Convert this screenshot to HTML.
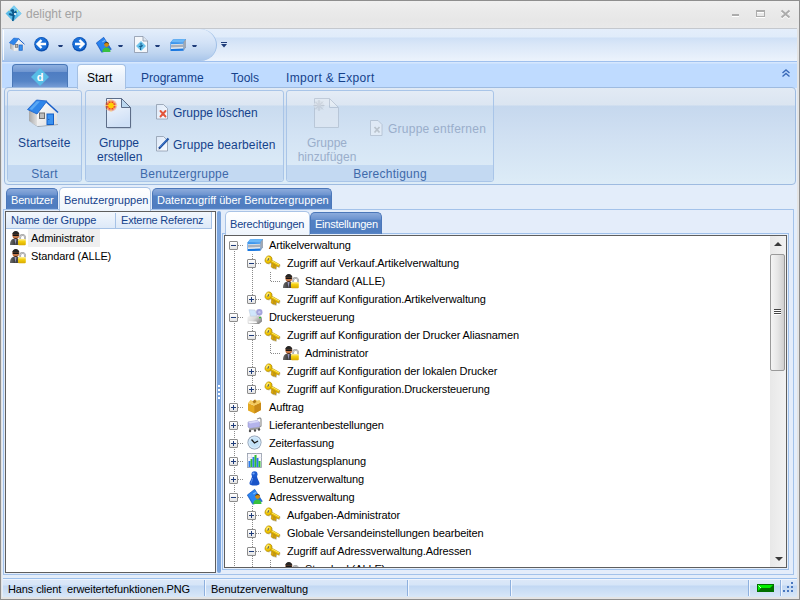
<!DOCTYPE html>
<html><head><meta charset="utf-8">
<style>
*{box-sizing:border-box;margin:0;padding:0}
html,body{width:800px;height:600px;overflow:hidden;background:#dfe9f5;font-family:"Liberation Sans",sans-serif;font-size:11px;color:#000}
.a{position:absolute}
svg{position:absolute;overflow:visible}
#frame{left:0;top:0;width:800px;height:600px;background:#e4e4e4;border:1px solid #8e8e8e}
#title{left:1px;top:1px;width:798px;height:27px;background:linear-gradient(#f0f0f0,#eaeaea 40%,#e7e7e7 70%,#e9e9e9)}
.tt{font-size:12px;color:#a3a3a3;white-space:nowrap}
#qat{left:2px;top:28px;width:795px;height:33px;background:linear-gradient(#e4eefb,#e0ecfa 8px,#cfe0f6 9px,#dae7f8 50%,#ecf3fc);border-top:1px solid #c4c8ce}
#qatl{left:2px;top:29px;width:215px;height:32px;border-radius:0 17px 17px 0/0 16px 16px 0;background:linear-gradient(#e4eefb,#d4e3f7 40%,#bfd5f0 75%,#a8c5ea);border-right:1px solid #9fbfe6}
#tabs{left:2px;top:61px;width:795px;height:27px;background:linear-gradient(#d6e7fd,#d6e7fd 1px,#bfdbff 2px);border-top:1px solid #9fc0ee}
.rt{position:absolute;font-size:12px;color:#15428b;white-space:nowrap;top:71px}
#appb{left:12px;top:64px;width:56px;height:24px;border:1px solid #4a78b8;border-bottom:none;border-radius:4px 4px 0 0;background:linear-gradient(#8eb0e0,#6f96d0 30%,#4e7dc2 32%,#5584c6 70%,#7aa0d8)}
#tstart{left:77px;top:64px;width:49px;height:25px;border:1px solid #a4c0e4;border-bottom:none;border-radius:4px 4px 0 0;background:linear-gradient(#fbfdff,#e9f1fb 50%,#dfe9f6)}
#rib{left:4px;top:87px;width:792px;height:98px;border:1px solid #9ebbe0;border-radius:4px;background:linear-gradient(#e2eaf4,#dbe5f1 17px,#c6d8ee 18px,#d0e0f2 50%,#ddecf7)}
.grp{position:absolute;border:1px solid #a9c5e8;border-radius:3px;background:linear-gradient(#e4ecf6,#dce6f2 14px,#c9dbef 15px,#d3e3f4 50%,#deedf8)}
.gl{position:absolute;left:0;bottom:0;width:100%;height:16px;background:#c3d9f2;text-align:center;font-size:12px;color:#3e6aaa;line-height:18px;border-radius:0 0 3px 3px;letter-spacing:0.25px}
.bt{position:absolute;font-size:12px;color:#15428b;white-space:nowrap;text-align:center;line-height:14px}
.dis{color:#9aaecb}
.dt{position:absolute;height:22px;border-radius:5px 5px 0 0;background:linear-gradient(#8cabdc,#6c93cf 30%,#5481c3 34%,#4f7dc0 90%,#5a86c6);color:#fff;font-size:11px;line-height:21px;white-space:nowrap;padding-left:4px;border:1px solid #4b77b9;border-bottom:none}
.dta{background:linear-gradient(#ffffff,#eef4fc);color:#15428b;border-color:#a9c3e6}
#tree{left:0;top:0;width:800px;height:600px;clip-path:inset(236px 30px 33px 225px)}
.tr{position:absolute;font-size:11px;white-space:nowrap;line-height:18px;height:18px;letter-spacing:-0.12px}
.ex{position:absolute;width:9px;height:9px;border:1px solid #8c8c8c;border-radius:1px;background:linear-gradient(#fff,#e4e4e4)}
.ex:before{content:"";position:absolute;left:1px;top:3px;width:5px;height:1px;background:#1f3c7a}
.ex.p:after{content:"";position:absolute;left:3px;top:1px;width:1px;height:5px;background:#1f3c7a}
.vd{position:absolute;width:1px;background-image:linear-gradient(#8a8a8a 50%,transparent 50%);background-size:1px 2px}
.hd{position:absolute;height:1px;background-image:linear-gradient(90deg,#8a8a8a 50%,transparent 50%);background-size:2px 1px}

</style></head><body>

<svg width="0" height="0" style="position:absolute"><defs><linearGradient id="ub" x1="0" x2="1"><stop offset="0" stop-color="#6a6a6a"/><stop offset="0.5" stop-color="#3c3c3c"/><stop offset="1" stop-color="#5a5a5a"/></linearGradient><linearGradient id="ul" x1="0" x2="0" y1="0" y2="1"><stop offset="0" stop-color="#fff0a0"/><stop offset="0.4" stop-color="#f4d010"/><stop offset="1" stop-color="#d8a800"/></linearGradient></defs></svg>
<div class="a" id="frame"></div>
<div class="a" id="title"></div>
<svg style="left:5px;top:5px" width="17" height="17" viewBox="0 0 17 17"><path d="M9 0.5 L16.5 8.5 L8 16.5 L0.5 8.5Z" fill="#5bbce8"/><path d="M9 0.5 L16.5 8.5 L14 11 L7 2.5Z" fill="#7ccdf0"/><path d="M7 4 L9 4.5 L9 7 L11 5.5 L12 7.5 L10 9 L9.5 12 L8.5 16 L7 16 L7.5 11 L5 10.5 L3.5 9 L5 8 L7.5 9 L6.5 6.5 L5 6Z" fill="#0c5a8c"/><circle cx="10" cy="9" r="1.1" fill="#fff"/><circle cx="12.5" cy="6" r="0.7" fill="#d0ff80"/><circle cx="4.5" cy="5" r="0.6" fill="#ffff80"/></svg>
<div class="a tt" style="left:26px;top:7px">delight erp</div>
<div class="a" style="left:732px;top:14px;width:7px;height:2px;background:#acacac;box-shadow:0 1px #fff"></div>
<div class="a" style="left:756px;top:10px;width:9px;height:7px;border:1px solid #acacac;border-top-width:2px;box-shadow:0 1px #fff,inset 0 1px #fff"></div>
<svg style="left:781px;top:10px" width="9" height="9" viewBox="0 0 9 9"><path d="M0.5 1.5 L8.5 8.5 M8.5 1.5 L0.5 8.5" stroke="#ffffff" stroke-width="2"/><path d="M0.5 0.5 L8.5 7.5 M8.5 0.5 L0.5 7.5" stroke="#acacac" stroke-width="2"/></svg>
<div class="a" id="qat"></div>
<div class="a" id="qatl"></div>
<div class="a" style="left:3px;top:30px;width:1px;height:30px;background:linear-gradient(#ffffff,#f4f8fd)"></div>
<!-- QAT icons -->
<svg style="left:9px;top:37px" width="16" height="16" viewBox="0 0 32 32">
<path d="M2 12 L10 16 L10 28 L2 23Z" fill="url(#hw)"/>
<path d="M10 16 L19.5 5 L30 14 L30 26 L10 28Z" fill="url(#hf)"/>
<path d="M19.5 4 L31 14.5" stroke="#1a5fc8" stroke-width="2"/>
<path d="M0.5 11.5 L9.5 2 L20 3 L10 16Z" fill="#2f86ea" stroke="#1a5fc8" stroke-width="1"/>
<rect x="12.5" y="15" width="5" height="5.5" fill="#bdbdbd" stroke="#6e6e6e" stroke-width="1.5"/>
<rect x="20" y="16" width="6.5" height="10.5" fill="#3b92f0" stroke="#1560c8" stroke-width="1.5"/>
</svg>
<svg style="left:34px;top:37px" width="16" height="16" viewBox="0 0 16 16"><circle cx="7.5" cy="7.3" r="7.2" fill="#0a4fb0"/><circle cx="7.2" cy="6.8" r="6.2" fill="#1a6fd8"/><path d="M12 7 H4 M7.5 3 L3.5 7 L7.5 11" stroke="#fff" stroke-width="2.4" fill="none" stroke-linejoin="miter"/></svg>
<svg style="left:58px;top:45px" width="5" height="2" viewBox="0 0 5 2"><path d="M0 0 H5 L4 2 H1Z" fill="#1f3d7a"/></svg>
<svg style="left:72px;top:37px" width="16" height="16" viewBox="0 0 16 16"><circle cx="7.5" cy="7.3" r="7.2" fill="#0a4fb0"/><circle cx="7.2" cy="6.8" r="6.2" fill="#1a6fd8"/><path d="M3 7 H11 M7.5 3 L11.5 7 L7.5 11" stroke="#fff" stroke-width="2.4" fill="none"/></svg>
<svg style="left:96px;top:37px" width="16" height="16" viewBox="0 0 16 16"><path d="M7.7 0.3 L0.3 6 L5.7 15.3 L15.3 12.3Z" fill="#1e6ee0" stroke="#1450b0" stroke-width="0.6"/><path d="M7.7 0.8 L12 8 L6 14 L1 6Z" fill="#2a84f0"/><path d="M6 4.5 L9 2.8 L9.6 3.8 L6.6 5.5Z" fill="#7ab8f8"/><path d="M6.2 15 C6.5 11.5 8.5 10.5 10.5 10.5 C12.5 10.5 14.3 11.5 14.5 15Z" fill="#38c040"/><circle cx="10.6" cy="7.6" r="2.4" fill="#d08a10"/><path d="M8.2 7 C8.3 4.5 12.9 4.5 13 7 C12 5.8 9.2 5.8 8.2 7Z" fill="#202020"/></svg>
<svg style="left:118px;top:45px" width="5" height="2" viewBox="0 0 5 2"><path d="M0 0 H5 L4 2 H1Z" fill="#1f3d7a"/></svg>
<svg style="left:133px;top:36px" width="16" height="17" viewBox="0 0 16 17"><path d="M1.5 0.5 H10 L14.5 5 V16.5 H1.5Z" fill="#f4f7fb" stroke="#8a96a8" stroke-width="0.8"/><path d="M10 0.5 V5 H14.5" fill="#dde6f0" stroke="#8a96a8" stroke-width="0.8"/><path d="M3 10 L8 5 L13 10 L8 15Z" fill="#6cc4ec"/><path d="M7.5 7 L8.5 7 L8.5 9.5 L10 8.8 L9.5 10.5 L8.3 11 L8 14 L7 14 L7.3 11 L5.5 10.5 L6.5 9.8 L7.5 10.2Z" fill="#0c5a8c"/></svg>
<svg style="left:155px;top:45px" width="5" height="2" viewBox="0 0 5 2"><path d="M0 0 H5 L4 2 H1Z" fill="#1f3d7a"/></svg>
<svg style="left:170px;top:37px" width="16" height="16" viewBox="0 0 16 16">
<path d="M0.5 5.5 L3 2.5 L16 2 L16 10 L13.5 13.5 L0.5 14Z" fill="#1a78e0"/>
<path d="M0.5 5.5 L3 2.5 L16 2 L13.5 5Z" fill="#6ab8f8"/>
<path d="M1 6 L13.5 5.5 L13.5 12.5 L1 13Z" fill="#e8ecf0"/>
<path d="M1 8 L13.5 7.5 L13.5 10 L1 10.5Z" fill="#a8b0bc"/>
<path d="M1 6 L13.5 5.5 L13.5 6.8 L1 7.3Z" fill="#3a98f0"/>
<path d="M1 12 L13.5 11.5 L13.5 13.5 L1 14Z" fill="#1a78e0"/>
<path d="M13.5 5 L16 2 L16 10 L13.5 13.5Z" fill="#a0a8b4"/>
</svg>
<svg style="left:192px;top:45px" width="5" height="2" viewBox="0 0 5 2"><path d="M0 0 H5 L4 2 H1Z" fill="#1f3d7a"/></svg>
<svg style="left:221px;top:42px" width="6" height="6" viewBox="0 0 6 6"><rect x="0" y="0" width="6" height="1" fill="#1f3d7a"/><path d="M0 2 H6 L3 5.5Z" fill="#1f3d7a"/></svg>
<!-- tabs -->
<div class="a" id="tabs"></div>
<div class="a" id="appb"></div>
<svg style="left:31px;top:68px" width="18" height="18" viewBox="0 0 18 18"><path d="M9 0 L18 9 L9 18 L0 9Z" fill="#58bde6"/><text x="9" y="13" font-family="Liberation Sans" font-weight="bold" font-size="11" fill="#fff" text-anchor="middle">d</text></svg>
<div class="a" style="left:2px;top:88px;width:795px;height:509px;background:#e3edfa"></div>
<div class="a" id="rib"></div>
<div class="a" id="tstart"></div>
<div class="rt" style="left:87px;color:#000">Start</div>
<div class="rt" style="left:141px">Programme</div>
<div class="rt" style="left:231px">Tools</div>
<div class="rt" style="left:286px;letter-spacing:0.35px">Import &amp; Export</div>
<svg style="left:782px;top:69px" width="8" height="8" viewBox="0 0 8 8"><path d="M0.5 4 L4 1 L7.5 4 M0.5 7.5 L4 4.5 L7.5 7.5" stroke="#3a6ab8" stroke-width="1.4" fill="none"/></svg>
<!-- ribbon groups -->
<div class="grp" style="left:7px;top:90px;width:75px;height:92px"><div class="gl">Start</div></div>
<div class="grp" style="left:85px;top:90px;width:199px;height:92px"><div class="gl">Benutzergruppe</div></div>
<div class="grp" style="left:286px;top:90px;width:208px;height:92px"><div class="gl">Berechtigung</div></div>
<!-- big buttons -->
<svg style="left:27px;top:98px" width="32" height="32" viewBox="0 0 32 32"><defs><linearGradient id="hw" x1="0" x2="1"><stop offset="0" stop-color="#a8a8a8"/><stop offset="1" stop-color="#e0e0e0"/></linearGradient><linearGradient id="hf" x1="0" x2="1" y1="0" y2="1"><stop offset="0" stop-color="#ffffff"/><stop offset="1" stop-color="#dcdcdc"/></linearGradient></defs>
<path d="M3 24 L11 29 L31 27 L31 26 L11 28Z" fill="#707070" opacity="0.5"/>
<path d="M2 12 L10 16 L10 28 L2 23Z" fill="url(#hw)"/>
<path d="M10 16 L19.5 5 L30 14 L30 26 L10 28Z" fill="url(#hf)"/>
<path d="M19.5 4 L31 14.5" stroke="#1a5fc8" stroke-width="1.6"/>
<path d="M0.5 11.5 L9.5 2 L20 3 L10 16Z" fill="#2f86ea" stroke="#1a5fc8" stroke-width="0.8"/>
<path d="M2.5 11 L9.8 3.2 L13 3.5 L5 12Z" fill="#5aa8f4"/>
<rect x="12.5" y="15" width="5" height="5.5" fill="#bdbdbd" stroke="#6e6e6e" stroke-width="1"/>
<rect x="20" y="16" width="6.5" height="10.5" fill="#3b92f0" stroke="#1560c8" stroke-width="1"/>
<circle cx="21.8" cy="21.5" r="0.6" fill="#1a4aa0"/>
</svg>
<div class="bt" style="left:18px;top:136px;letter-spacing:0.2px">Startseite</div>
<svg style="left:103px;top:97px" width="32" height="32" viewBox="0 0 32 32"><defs><linearGradient id="pg" x1="0" x2="0.3" y1="0" y2="1"><stop offset="0" stop-color="#f6f9fe"/><stop offset="1" stop-color="#cfe0f6"/></linearGradient><radialGradient id="sb"><stop offset="0" stop-color="#ffd000"/><stop offset="0.35" stop-color="#ffb000"/><stop offset="0.5" stop-color="#f04010"/><stop offset="1" stop-color="#f04010" stop-opacity="0"/></radialGradient></defs>
<path d="M4 2 H18.5 L27.5 11 V31 H4Z" fill="#7a889c" opacity="0.35" transform="translate(0.7,0.7)"/>
<path d="M3.5 1.5 H18.5 L27.5 10.5 V30.5 H3.5Z" fill="url(#pg)" stroke="#5d6d88" stroke-width="1"/>
<path d="M18.5 1.5 V10.5 H27.5Z" fill="#bcd8f0" stroke="#5d6d88" stroke-width="1"/>
<circle cx="8" cy="8.5" r="6.5" fill="url(#sb)"/>
<path d="M8 2 V15 M1.5 8.5 H14.5 M3.5 4 L12.5 13 M12.5 4 L3.5 13" stroke="#fff080" stroke-width="0.7" opacity="0.9"/>
<circle cx="8" cy="8.5" r="2.6" fill="#ffd000"/>
</svg>
<div class="bt" style="left:97px;top:136px;width:44px">Gruppe<br>erstellen</div>
<svg style="left:155px;top:104px" width="16" height="16" viewBox="0 0 16 16"><defs><linearGradient id="sp" x1="0" x2="1" y1="0" y2="1"><stop offset="0" stop-color="#dce8f8"/><stop offset="1" stop-color="#f8fbff"/></linearGradient></defs><path d="M1.5 0.5 H8.5 L12.5 4.5 V15 H1.5Z" fill="url(#sp)" stroke="#8e9aac" stroke-width="0.8"/><path d="M5.5 7 L10.5 12.5 M10.5 7 L5.5 12.5" stroke="#e2553a" stroke-width="1.9" stroke-linecap="round"/></svg>
<div class="bt" style="left:173px;top:106px">Gruppe löschen</div>
<svg style="left:155px;top:136px" width="16" height="16" viewBox="0 0 16 16"><path d="M1.5 0.5 H8.5 L12.5 4.5 V15 H1.5Z" fill="url(#sp)" stroke="#8e9aac" stroke-width="0.8"/><path d="M4 12.5 L13.5 2.5" stroke="#1e4fa0" stroke-width="2.2"/><path d="M5 11 L12 3.5" stroke="#4a88e0" stroke-width="0.8"/><path d="M3.5 13.5 L4.2 11.8 L5.2 12.8Z" fill="#1e3060"/></svg>
<div class="bt" style="left:173px;top:138px;letter-spacing:0.15px">Gruppe bearbeiten</div>
<svg style="left:311px;top:97px" width="32" height="32" viewBox="0 0 32 32" opacity="0.55"><path d="M3.5 1.5 H18.5 L27.5 10.5 V30.5 H3.5Z" fill="#e4eaf2" stroke="#a8b4c4" stroke-width="1"/><path d="M18.5 1.5 V10.5 H27.5Z" fill="#eef2f6" stroke="#a8b4c4" stroke-width="1"/><circle cx="8" cy="8.5" r="5" fill="#d8dde4"/><path d="M8 3 V14 M2.5 8.5 H13.5 M4 4.5 L12 12.5 M12 4.5 L4 12.5" stroke="#a8aeb8" stroke-width="0.8"/><circle cx="8" cy="8.5" r="2.2" fill="#c4c8d0"/></svg>
<div class="bt dis" style="left:296px;top:136px;width:62px">Gruppe<br>hinzufügen</div>
<svg style="left:369px;top:120px" width="16" height="16" viewBox="0 0 16 16" opacity="0.45"><path d="M1.5 0.5 H9 L13 4.5 V15.5 H1.5Z" fill="#f4f6fa" stroke="#8a94a4" stroke-width="0.8"/><path d="M5.5 7 L10.5 12.5 M10.5 7 L5.5 12.5" stroke="#a0a0a0" stroke-width="1.8"/></svg>
<div class="bt dis" style="left:388px;top:122px;letter-spacing:0.25px">Gruppe entfernen</div>
<!-- doc tabs -->

<div class="a" style="left:3px;top:209px;width:791px;height:366px;background:#e4edfa;border:1px solid #a3c2ea"></div>
<div class="dt" style="left:6px;top:188px;width:52px;height:21px;line-height:22px;letter-spacing:-0.2px">Benutzer</div>
<div class="dt" style="left:152px;top:188px;width:180px;height:21px;line-height:22px">Datenzugriff über Benutzergruppen</div>
<div class="dt dta" style="left:59px;top:187px;width:92px;height:24px;line-height:25px">Benutzergruppen</div>
<!-- left list -->
<div class="a" style="left:5px;top:211px;width:211px;height:362px;background:#fff;border:1px solid #5e5e5e"></div>
<div class="a" style="left:6px;top:212px;width:206px;height:17px;background:linear-gradient(#f2f7fd,#dde9f8);border-bottom:1px solid #a6c2e6;border-right:1px solid #a6c2e6"></div>
<div class="a" style="left:115px;top:213px;width:1px;height:15px;background:#a6c2e6"></div>
<div class="a" style="left:11px;top:214px;color:#15428b;font-size:11px;letter-spacing:-0.2px">Name der Gruppe</div>
<div class="a" style="left:121px;top:214px;color:#15428b;font-size:11px;letter-spacing:-0.2px">Externe Referenz</div>
<div class="a" style="left:28px;top:229px;width:72px;height:18px;background:#efefef"></div>
<svg style="left:10px;top:230px" width="16" height="16" viewBox="0 0 16 16">
<path d="M0 15 C0 10.5 2 8.5 5.5 8.5 C9 8.5 10.5 10.5 10.5 15Z" fill="url(#ub)"/>
<path d="M4.5 9 L5.5 15 L6.5 9Z" fill="#9a9ac0"/>
<ellipse cx="5.8" cy="5.2" rx="3.4" ry="3.8" fill="#c87848"/>
<path d="M2.2 5.5 C1.6 -0.6 10 -0.6 9.4 5.5 L9 4 H2.6Z" fill="#262626"/>
<path d="M2.8 4.3 H8.8 V6 H2.8Z" fill="#151515"/>
<path d="M3.6 7.2 C4.2 9.2 7.4 9.2 8 7.2 L7.2 8 H4.4Z" fill="#2a1a10"/>
<path d="M10.2 9.5 V7.3 A2.4 2.4 0 0 1 15 7.3 V9.5" stroke="#909090" stroke-width="1.7" fill="none"/>
<path d="M10.2 9.5 V7.3 A2.4 2.4 0 0 1 15 7.3 V9.5" stroke="#f0f0f0" stroke-width="0.6" fill="none"/>
<rect x="8" y="9" width="7.8" height="6.3" rx="1" fill="url(#ul)"/>
</svg>
<div class="tr" style="left:31px;top:229px">Administrator</div>
<svg style="left:10px;top:248px" width="16" height="16" viewBox="0 0 16 16">
<path d="M0 15 C0 10.5 2 8.5 5.5 8.5 C9 8.5 10.5 10.5 10.5 15Z" fill="url(#ub)"/>
<path d="M4.5 9 L5.5 15 L6.5 9Z" fill="#9a9ac0"/>
<ellipse cx="5.8" cy="5.2" rx="3.4" ry="3.8" fill="#c87848"/>
<path d="M2.2 5.5 C1.6 -0.6 10 -0.6 9.4 5.5 L9 4 H2.6Z" fill="#262626"/>
<path d="M2.8 4.3 H8.8 V6 H2.8Z" fill="#151515"/>
<path d="M3.6 7.2 C4.2 9.2 7.4 9.2 8 7.2 L7.2 8 H4.4Z" fill="#2a1a10"/>
<path d="M10.2 9.5 V7.3 A2.4 2.4 0 0 1 15 7.3 V9.5" stroke="#909090" stroke-width="1.7" fill="none"/>
<path d="M10.2 9.5 V7.3 A2.4 2.4 0 0 1 15 7.3 V9.5" stroke="#f0f0f0" stroke-width="0.6" fill="none"/>
<rect x="8" y="9" width="7.8" height="6.3" rx="1" fill="url(#ul)"/>
</svg>
<div class="tr" style="left:31px;top:247px">Standard (ALLE)</div>
<!-- splitter -->
<div class="a" style="left:217px;top:211px;width:4px;height:362px;background:#7ba4dc;border-radius:2px"></div>
<div class="a" style="left:218px;top:385px;width:2px;height:2px;background:#fff"></div>
<div class="a" style="left:218px;top:389px;width:2px;height:2px;background:#fff"></div>
<div class="a" style="left:218px;top:393px;width:2px;height:2px;background:#fff"></div>
<div class="a" style="left:218px;top:397px;width:2px;height:2px;background:#fff"></div>
<!-- right tab control -->
<div class="a" style="left:222px;top:233px;width:567px;height:337px;background:#e6effb;border:1px solid #9fc0ea"></div>
<div class="dt" style="left:310px;top:212px;width:72px;height:22px;line-height:23px;letter-spacing:-0.25px">Einstellungen</div>
<div class="dt dta" style="left:225px;top:211px;width:85px;height:24px;line-height:25px;letter-spacing:-0.2px">Berechtigungen</div>
<div class="a" style="left:224px;top:235px;width:563px;height:333px;background:#fff;border:1px solid #5e5e5e"></div>

<div class="a" id="tree">
<div class="vd" style="left:234px;top:245px;height:355px"></div>
<div class="vd" style="left:252px;top:254px;height:45px"></div>
<div class="vd" style="left:270px;top:272px;height:9px"></div>
<div class="vd" style="left:252px;top:326px;height:63px"></div>
<div class="vd" style="left:270px;top:344px;height:9px"></div>
<div class="vd" style="left:252px;top:506px;height:94px"></div>
<div class="vd" style="left:270px;top:560px;height:9px"></div>
<div class="hd" style="left:238px;top:245px;width:6px"></div>
<div class="ex " style="left:229px;top:241px"></div>
<svg style="left:247px;top:237px" width="16" height="16" viewBox="0 0 16 16">
<path d="M0.5 5.5 L3 2.5 L16 2 L16 10 L13.5 13.5 L0.5 14Z" fill="#1a78e0"/>
<path d="M0.5 5.5 L3 2.5 L16 2 L13.5 5Z" fill="#6ab8f8"/>
<path d="M1 6 L13.5 5.5 L13.5 12.5 L1 13Z" fill="#e8ecf0"/>
<path d="M1 8 L13.5 7.5 L13.5 10 L1 10.5Z" fill="#a8b0bc"/>
<path d="M1 6 L13.5 5.5 L13.5 6.8 L1 7.3Z" fill="#3a98f0"/>
<path d="M1 12 L13.5 11.5 L13.5 13.5 L1 14Z" fill="#1a78e0"/>
<path d="M13.5 5 L16 2 L16 10 L13.5 13.5Z" fill="#a0a8b4"/>
</svg>
<div class="tr" style="left:269px;top:236px">Artikelverwaltung</div>
<div class="hd" style="left:256px;top:263px;width:6px"></div>
<div class="ex " style="left:247px;top:259px"></div>
<svg style="left:265px;top:255px" width="16" height="16" viewBox="0 0 16 16">
<g opacity="0.3" transform="translate(0.8,0.9)"><path d="M4.5 3.8 L14.8 9.6 L13.6 12 L3.4 6.2Z M6.5 8 L11.2 10.6 L10.6 14 L9 13 L8.6 13.6 L6 12Z" fill="#503c00"/><ellipse cx="3.4" cy="4.6" rx="3.1" ry="3.9" transform="rotate(25 3.4 4.6)" fill="#503c00"/></g>
<path d="M4.5 3.8 L14.8 9.6 L13.6 12 L3.4 6.2Z" fill="#e8b800" stroke="#b08800" stroke-width="0.5"/>
<path d="M4.8 4.2 L14.2 9.5 L13.9 10.2 L4.5 5Z" fill="#fff070"/>
<path d="M6.5 8.3 L8.8 9.5 L8.5 13.2 L6.2 12Z M9.2 9.7 L11.2 10.8 L10.8 13.8 L9 12.8Z" fill="#e0a800" stroke="#a88000" stroke-width="0.5"/>
<ellipse cx="3.4" cy="4.6" rx="3.1" ry="3.9" transform="rotate(25 3.4 4.6)" fill="#f0c400" stroke="#b08800" stroke-width="0.6"/>
<ellipse cx="3" cy="3.8" rx="1.8" ry="2.2" transform="rotate(25 3 3.8)" fill="#ffe860"/>
<ellipse cx="3.3" cy="4.5" rx="0.7" ry="1.7" transform="rotate(25 3.3 4.5)" fill="#6a6a50"/>
</svg>
<div class="tr" style="left:287px;top:254px">Zugriff auf Verkauf.Artikelverwaltung</div>
<div class="hd" style="left:271px;top:281px;width:9px"></div>
<svg style="left:283px;top:273px" width="16" height="16" viewBox="0 0 16 16">
<path d="M0 15 C0 10.5 2 8.5 5.5 8.5 C9 8.5 10.5 10.5 10.5 15Z" fill="url(#ub)"/>
<path d="M4.5 9 L5.5 15 L6.5 9Z" fill="#9a9ac0"/>
<ellipse cx="5.8" cy="5.2" rx="3.4" ry="3.8" fill="#c87848"/>
<path d="M2.2 5.5 C1.6 -0.6 10 -0.6 9.4 5.5 L9 4 H2.6Z" fill="#262626"/>
<path d="M2.8 4.3 H8.8 V6 H2.8Z" fill="#151515"/>
<path d="M3.6 7.2 C4.2 9.2 7.4 9.2 8 7.2 L7.2 8 H4.4Z" fill="#2a1a10"/>
<path d="M10.2 9.5 V7.3 A2.4 2.4 0 0 1 15 7.3 V9.5" stroke="#909090" stroke-width="1.7" fill="none"/>
<path d="M10.2 9.5 V7.3 A2.4 2.4 0 0 1 15 7.3 V9.5" stroke="#f0f0f0" stroke-width="0.6" fill="none"/>
<rect x="8" y="9" width="7.8" height="6.3" rx="1" fill="url(#ul)"/>
</svg>
<div class="tr" style="left:305px;top:272px">Standard (ALLE)</div>
<div class="hd" style="left:256px;top:299px;width:6px"></div>
<div class="ex p" style="left:247px;top:295px"></div>
<svg style="left:265px;top:291px" width="16" height="16" viewBox="0 0 16 16">
<g opacity="0.3" transform="translate(0.8,0.9)"><path d="M4.5 3.8 L14.8 9.6 L13.6 12 L3.4 6.2Z M6.5 8 L11.2 10.6 L10.6 14 L9 13 L8.6 13.6 L6 12Z" fill="#503c00"/><ellipse cx="3.4" cy="4.6" rx="3.1" ry="3.9" transform="rotate(25 3.4 4.6)" fill="#503c00"/></g>
<path d="M4.5 3.8 L14.8 9.6 L13.6 12 L3.4 6.2Z" fill="#e8b800" stroke="#b08800" stroke-width="0.5"/>
<path d="M4.8 4.2 L14.2 9.5 L13.9 10.2 L4.5 5Z" fill="#fff070"/>
<path d="M6.5 8.3 L8.8 9.5 L8.5 13.2 L6.2 12Z M9.2 9.7 L11.2 10.8 L10.8 13.8 L9 12.8Z" fill="#e0a800" stroke="#a88000" stroke-width="0.5"/>
<ellipse cx="3.4" cy="4.6" rx="3.1" ry="3.9" transform="rotate(25 3.4 4.6)" fill="#f0c400" stroke="#b08800" stroke-width="0.6"/>
<ellipse cx="3" cy="3.8" rx="1.8" ry="2.2" transform="rotate(25 3 3.8)" fill="#ffe860"/>
<ellipse cx="3.3" cy="4.5" rx="0.7" ry="1.7" transform="rotate(25 3.3 4.5)" fill="#6a6a50"/>
</svg>
<div class="tr" style="left:287px;top:290px">Zugriff auf Konfiguration.Artikelverwaltung</div>
<div class="hd" style="left:238px;top:317px;width:6px"></div>
<div class="ex " style="left:229px;top:313px"></div>
<svg style="left:247px;top:309px" width="16" height="16" viewBox="0 0 16 16">
<defs><linearGradient id="prb" x1="0" x2="1" y1="0" y2="0.6"><stop offset="0" stop-color="#f4f4f4"/><stop offset="0.5" stop-color="#dcdcdc"/><stop offset="1" stop-color="#8a8a8a"/></linearGradient></defs>
<path d="M0.5 8.5 L2.5 6.5 L13 6.5 L15 8.5 L15 12.5 L12 15 L1 15 L0.5 13Z" fill="url(#prb)"/>
<path d="M1.5 12 L9.5 12.5 L10 14 L2 14Z" fill="#fafafa"/>
<circle cx="12.3" cy="3.3" r="3.2" fill="#a4a4dc"/>
<circle cx="12.3" cy="3.3" r="1.2" fill="#c8c8f0"/>
<path d="M2 0.8 L8 1 L10 7 L3.5 7.2Z" fill="#d0e6fc" stroke="#b8c4d4" stroke-width="0.5"/>
<rect x="12" y="8" width="2" height="1.3" fill="#30c030"/>
</svg>
<div class="tr" style="left:269px;top:308px">Druckersteuerung</div>
<div class="hd" style="left:256px;top:335px;width:6px"></div>
<div class="ex " style="left:247px;top:331px"></div>
<svg style="left:265px;top:327px" width="16" height="16" viewBox="0 0 16 16">
<g opacity="0.3" transform="translate(0.8,0.9)"><path d="M4.5 3.8 L14.8 9.6 L13.6 12 L3.4 6.2Z M6.5 8 L11.2 10.6 L10.6 14 L9 13 L8.6 13.6 L6 12Z" fill="#503c00"/><ellipse cx="3.4" cy="4.6" rx="3.1" ry="3.9" transform="rotate(25 3.4 4.6)" fill="#503c00"/></g>
<path d="M4.5 3.8 L14.8 9.6 L13.6 12 L3.4 6.2Z" fill="#e8b800" stroke="#b08800" stroke-width="0.5"/>
<path d="M4.8 4.2 L14.2 9.5 L13.9 10.2 L4.5 5Z" fill="#fff070"/>
<path d="M6.5 8.3 L8.8 9.5 L8.5 13.2 L6.2 12Z M9.2 9.7 L11.2 10.8 L10.8 13.8 L9 12.8Z" fill="#e0a800" stroke="#a88000" stroke-width="0.5"/>
<ellipse cx="3.4" cy="4.6" rx="3.1" ry="3.9" transform="rotate(25 3.4 4.6)" fill="#f0c400" stroke="#b08800" stroke-width="0.6"/>
<ellipse cx="3" cy="3.8" rx="1.8" ry="2.2" transform="rotate(25 3 3.8)" fill="#ffe860"/>
<ellipse cx="3.3" cy="4.5" rx="0.7" ry="1.7" transform="rotate(25 3.3 4.5)" fill="#6a6a50"/>
</svg>
<div class="tr" style="left:287px;top:326px">Zugriff auf Konfiguration der Drucker Aliasnamen</div>
<div class="hd" style="left:271px;top:353px;width:9px"></div>
<svg style="left:283px;top:345px" width="16" height="16" viewBox="0 0 16 16">
<path d="M0 15 C0 10.5 2 8.5 5.5 8.5 C9 8.5 10.5 10.5 10.5 15Z" fill="url(#ub)"/>
<path d="M4.5 9 L5.5 15 L6.5 9Z" fill="#9a9ac0"/>
<ellipse cx="5.8" cy="5.2" rx="3.4" ry="3.8" fill="#c87848"/>
<path d="M2.2 5.5 C1.6 -0.6 10 -0.6 9.4 5.5 L9 4 H2.6Z" fill="#262626"/>
<path d="M2.8 4.3 H8.8 V6 H2.8Z" fill="#151515"/>
<path d="M3.6 7.2 C4.2 9.2 7.4 9.2 8 7.2 L7.2 8 H4.4Z" fill="#2a1a10"/>
<path d="M10.2 9.5 V7.3 A2.4 2.4 0 0 1 15 7.3 V9.5" stroke="#909090" stroke-width="1.7" fill="none"/>
<path d="M10.2 9.5 V7.3 A2.4 2.4 0 0 1 15 7.3 V9.5" stroke="#f0f0f0" stroke-width="0.6" fill="none"/>
<rect x="8" y="9" width="7.8" height="6.3" rx="1" fill="url(#ul)"/>
</svg>
<div class="tr" style="left:305px;top:344px">Administrator</div>
<div class="hd" style="left:256px;top:371px;width:6px"></div>
<div class="ex p" style="left:247px;top:367px"></div>
<svg style="left:265px;top:363px" width="16" height="16" viewBox="0 0 16 16">
<g opacity="0.3" transform="translate(0.8,0.9)"><path d="M4.5 3.8 L14.8 9.6 L13.6 12 L3.4 6.2Z M6.5 8 L11.2 10.6 L10.6 14 L9 13 L8.6 13.6 L6 12Z" fill="#503c00"/><ellipse cx="3.4" cy="4.6" rx="3.1" ry="3.9" transform="rotate(25 3.4 4.6)" fill="#503c00"/></g>
<path d="M4.5 3.8 L14.8 9.6 L13.6 12 L3.4 6.2Z" fill="#e8b800" stroke="#b08800" stroke-width="0.5"/>
<path d="M4.8 4.2 L14.2 9.5 L13.9 10.2 L4.5 5Z" fill="#fff070"/>
<path d="M6.5 8.3 L8.8 9.5 L8.5 13.2 L6.2 12Z M9.2 9.7 L11.2 10.8 L10.8 13.8 L9 12.8Z" fill="#e0a800" stroke="#a88000" stroke-width="0.5"/>
<ellipse cx="3.4" cy="4.6" rx="3.1" ry="3.9" transform="rotate(25 3.4 4.6)" fill="#f0c400" stroke="#b08800" stroke-width="0.6"/>
<ellipse cx="3" cy="3.8" rx="1.8" ry="2.2" transform="rotate(25 3 3.8)" fill="#ffe860"/>
<ellipse cx="3.3" cy="4.5" rx="0.7" ry="1.7" transform="rotate(25 3.3 4.5)" fill="#6a6a50"/>
</svg>
<div class="tr" style="left:287px;top:362px">Zugriff auf Konfiguration der lokalen Drucker</div>
<div class="hd" style="left:256px;top:389px;width:6px"></div>
<div class="ex p" style="left:247px;top:385px"></div>
<svg style="left:265px;top:381px" width="16" height="16" viewBox="0 0 16 16">
<g opacity="0.3" transform="translate(0.8,0.9)"><path d="M4.5 3.8 L14.8 9.6 L13.6 12 L3.4 6.2Z M6.5 8 L11.2 10.6 L10.6 14 L9 13 L8.6 13.6 L6 12Z" fill="#503c00"/><ellipse cx="3.4" cy="4.6" rx="3.1" ry="3.9" transform="rotate(25 3.4 4.6)" fill="#503c00"/></g>
<path d="M4.5 3.8 L14.8 9.6 L13.6 12 L3.4 6.2Z" fill="#e8b800" stroke="#b08800" stroke-width="0.5"/>
<path d="M4.8 4.2 L14.2 9.5 L13.9 10.2 L4.5 5Z" fill="#fff070"/>
<path d="M6.5 8.3 L8.8 9.5 L8.5 13.2 L6.2 12Z M9.2 9.7 L11.2 10.8 L10.8 13.8 L9 12.8Z" fill="#e0a800" stroke="#a88000" stroke-width="0.5"/>
<ellipse cx="3.4" cy="4.6" rx="3.1" ry="3.9" transform="rotate(25 3.4 4.6)" fill="#f0c400" stroke="#b08800" stroke-width="0.6"/>
<ellipse cx="3" cy="3.8" rx="1.8" ry="2.2" transform="rotate(25 3 3.8)" fill="#ffe860"/>
<ellipse cx="3.3" cy="4.5" rx="0.7" ry="1.7" transform="rotate(25 3.3 4.5)" fill="#6a6a50"/>
</svg>
<div class="tr" style="left:287px;top:380px">Zugriff auf Konfiguration.Druckersteuerung</div>
<div class="hd" style="left:238px;top:407px;width:6px"></div>
<div class="ex p" style="left:229px;top:403px"></div>
<svg style="left:247px;top:399px" width="16" height="16" viewBox="0 0 16 16">
<path d="M1 4 L7 6.5 L14 3.5 L14 11 L7.5 14.5 L1 11.5Z" fill="#e4a820"/>
<path d="M7.3 6.5 L14 3.5 L14 11 L7.5 14.5Z" fill="#c88a18"/>
<path d="M1 4 L3.5 1 L6 2 L8 0.5 L10 1.5 L12.5 1 L14 3.5 L7.3 6.5Z" fill="#f4cc60"/>
<path d="M5.5 2.5 L8 0.5 L9.5 3 L7 4.5Z" fill="#b07818"/>
</svg>
<div class="tr" style="left:269px;top:398px">Auftrag</div>
<div class="hd" style="left:238px;top:425px;width:6px"></div>
<div class="ex p" style="left:229px;top:421px"></div>
<svg style="left:247px;top:417px" width="16" height="16" viewBox="0 0 16 16">
<path d="M10 2 L13 1 L14 2 L14 9 L12.5 10" stroke="#909090" stroke-width="1.2" fill="none"/>
<path d="M1 5 L10 3.5 L12.5 5 L12.5 10 L3 11.5 L1 10Z" fill="#b4b4ec" stroke="#8a8ac0" stroke-width="0.5"/>
<path d="M1 5 L10 3.5 L12.5 5 L3 6.5Z" fill="#d8d8f8"/>
<path d="M2 11.5 L13 10 L13 12 L2 13.5Z" fill="#9a9a9a"/>
<circle cx="3" cy="14" r="1.2" fill="#505050"/><circle cx="8" cy="13.5" r="1.2" fill="#505050"/><circle cx="12" cy="12.5" r="1.2" fill="#505050"/>
</svg>
<div class="tr" style="left:269px;top:416px">Lieferantenbestellungen</div>
<div class="hd" style="left:238px;top:443px;width:6px"></div>
<div class="ex p" style="left:229px;top:439px"></div>
<svg style="left:247px;top:435px" width="16" height="16" viewBox="0 0 16 16">
<circle cx="7.5" cy="7.5" r="7" fill="#8a9ab0"/>
<circle cx="7.5" cy="7.5" r="6.2" fill="#d8ecfc"/>
<circle cx="7.5" cy="7.5" r="5" fill="#c4e2f8"/>
<path d="M4.5 4.5 L7.5 8 L11 6" stroke="#1a1a1a" stroke-width="1.3" fill="none"/>
</svg>
<div class="tr" style="left:269px;top:434px">Zeiterfassung</div>
<div class="hd" style="left:238px;top:461px;width:6px"></div>
<div class="ex p" style="left:229px;top:457px"></div>
<svg style="left:247px;top:453px" width="16" height="16" viewBox="0 0 16 16">
<rect x="0.5" y="0.5" width="14" height="14" fill="#f8f8fc" stroke="#9098a8" stroke-width="0.8"/>
<path d="M0.5 4.5 H14.5 M0.5 8.5 H14.5 M4.5 0.5 V14.5 M9.5 0.5 V14.5" stroke="#d8dce8" stroke-width="0.5"/>
<rect x="1.5" y="8" width="2" height="6" fill="#2a7ae8"/>
<rect x="3.5" y="6" width="2" height="8" fill="#30c030"/>
<rect x="5.5" y="4" width="2" height="10" fill="#2a7ae8"/>
<rect x="7.5" y="2" width="2" height="12" fill="#30c030"/>
<rect x="9.5" y="5" width="2" height="9" fill="#2a7ae8"/>
<rect x="11.5" y="8" width="2" height="6" fill="#30c030"/>
</svg>
<div class="tr" style="left:269px;top:452px">Auslastungsplanung</div>
<div class="hd" style="left:238px;top:479px;width:6px"></div>
<div class="ex p" style="left:229px;top:475px"></div>
<svg style="left:247px;top:471px" width="16" height="16" viewBox="0 0 16 16">
<path d="M5 5 C4.5 9 2.5 10.5 2.5 12.5 C2.5 14 4.5 14.5 7.5 14.5 C10.5 14.5 12.5 14 12.5 12.5 C12.5 10.5 10.5 9 10 5Z" fill="#1a54c8"/>
<circle cx="7.5" cy="3.3" r="3" fill="#1e5cd0"/>
<ellipse cx="6.5" cy="2.5" rx="1.2" ry="1" fill="#7aacf8"/>
<path d="M5.5 7 C5.3 9.5 4.2 11 4 12.5" stroke="#6a9cf0" stroke-width="0.9" fill="none"/>
</svg>
<div class="tr" style="left:269px;top:470px">Benutzerverwaltung</div>
<div class="hd" style="left:238px;top:497px;width:6px"></div>
<div class="ex " style="left:229px;top:493px"></div>
<svg style="left:247px;top:489px" width="16" height="16" viewBox="0 0 16 16"><path d="M7.7 0.3 L0.3 6 L5.7 15.3 L15.3 12.3Z" fill="#1e6ee0" stroke="#1450b0" stroke-width="0.6"/><path d="M7.7 0.8 L12 8 L6 14 L1 6Z" fill="#2a84f0"/><path d="M6 4.5 L9 2.8 L9.6 3.8 L6.6 5.5Z" fill="#7ab8f8"/><path d="M6.2 15 C6.5 11.5 8.5 10.5 10.5 10.5 C12.5 10.5 14.3 11.5 14.5 15Z" fill="#38c040"/><circle cx="10.6" cy="7.6" r="2.4" fill="#d08a10"/><path d="M8.2 7 C8.3 4.5 12.9 4.5 13 7 C12 5.8 9.2 5.8 8.2 7Z" fill="#202020"/></svg>
<div class="tr" style="left:269px;top:488px">Adressverwaltung</div>
<div class="hd" style="left:256px;top:515px;width:6px"></div>
<div class="ex p" style="left:247px;top:511px"></div>
<svg style="left:265px;top:507px" width="16" height="16" viewBox="0 0 16 16">
<g opacity="0.3" transform="translate(0.8,0.9)"><path d="M4.5 3.8 L14.8 9.6 L13.6 12 L3.4 6.2Z M6.5 8 L11.2 10.6 L10.6 14 L9 13 L8.6 13.6 L6 12Z" fill="#503c00"/><ellipse cx="3.4" cy="4.6" rx="3.1" ry="3.9" transform="rotate(25 3.4 4.6)" fill="#503c00"/></g>
<path d="M4.5 3.8 L14.8 9.6 L13.6 12 L3.4 6.2Z" fill="#e8b800" stroke="#b08800" stroke-width="0.5"/>
<path d="M4.8 4.2 L14.2 9.5 L13.9 10.2 L4.5 5Z" fill="#fff070"/>
<path d="M6.5 8.3 L8.8 9.5 L8.5 13.2 L6.2 12Z M9.2 9.7 L11.2 10.8 L10.8 13.8 L9 12.8Z" fill="#e0a800" stroke="#a88000" stroke-width="0.5"/>
<ellipse cx="3.4" cy="4.6" rx="3.1" ry="3.9" transform="rotate(25 3.4 4.6)" fill="#f0c400" stroke="#b08800" stroke-width="0.6"/>
<ellipse cx="3" cy="3.8" rx="1.8" ry="2.2" transform="rotate(25 3 3.8)" fill="#ffe860"/>
<ellipse cx="3.3" cy="4.5" rx="0.7" ry="1.7" transform="rotate(25 3.3 4.5)" fill="#6a6a50"/>
</svg>
<div class="tr" style="left:287px;top:506px">Aufgaben-Administrator</div>
<div class="hd" style="left:256px;top:533px;width:6px"></div>
<div class="ex p" style="left:247px;top:529px"></div>
<svg style="left:265px;top:525px" width="16" height="16" viewBox="0 0 16 16">
<g opacity="0.3" transform="translate(0.8,0.9)"><path d="M4.5 3.8 L14.8 9.6 L13.6 12 L3.4 6.2Z M6.5 8 L11.2 10.6 L10.6 14 L9 13 L8.6 13.6 L6 12Z" fill="#503c00"/><ellipse cx="3.4" cy="4.6" rx="3.1" ry="3.9" transform="rotate(25 3.4 4.6)" fill="#503c00"/></g>
<path d="M4.5 3.8 L14.8 9.6 L13.6 12 L3.4 6.2Z" fill="#e8b800" stroke="#b08800" stroke-width="0.5"/>
<path d="M4.8 4.2 L14.2 9.5 L13.9 10.2 L4.5 5Z" fill="#fff070"/>
<path d="M6.5 8.3 L8.8 9.5 L8.5 13.2 L6.2 12Z M9.2 9.7 L11.2 10.8 L10.8 13.8 L9 12.8Z" fill="#e0a800" stroke="#a88000" stroke-width="0.5"/>
<ellipse cx="3.4" cy="4.6" rx="3.1" ry="3.9" transform="rotate(25 3.4 4.6)" fill="#f0c400" stroke="#b08800" stroke-width="0.6"/>
<ellipse cx="3" cy="3.8" rx="1.8" ry="2.2" transform="rotate(25 3 3.8)" fill="#ffe860"/>
<ellipse cx="3.3" cy="4.5" rx="0.7" ry="1.7" transform="rotate(25 3.3 4.5)" fill="#6a6a50"/>
</svg>
<div class="tr" style="left:287px;top:524px">Globale Versandeinstellungen bearbeiten</div>
<div class="hd" style="left:256px;top:551px;width:6px"></div>
<div class="ex " style="left:247px;top:547px"></div>
<svg style="left:265px;top:543px" width="16" height="16" viewBox="0 0 16 16">
<g opacity="0.3" transform="translate(0.8,0.9)"><path d="M4.5 3.8 L14.8 9.6 L13.6 12 L3.4 6.2Z M6.5 8 L11.2 10.6 L10.6 14 L9 13 L8.6 13.6 L6 12Z" fill="#503c00"/><ellipse cx="3.4" cy="4.6" rx="3.1" ry="3.9" transform="rotate(25 3.4 4.6)" fill="#503c00"/></g>
<path d="M4.5 3.8 L14.8 9.6 L13.6 12 L3.4 6.2Z" fill="#e8b800" stroke="#b08800" stroke-width="0.5"/>
<path d="M4.8 4.2 L14.2 9.5 L13.9 10.2 L4.5 5Z" fill="#fff070"/>
<path d="M6.5 8.3 L8.8 9.5 L8.5 13.2 L6.2 12Z M9.2 9.7 L11.2 10.8 L10.8 13.8 L9 12.8Z" fill="#e0a800" stroke="#a88000" stroke-width="0.5"/>
<ellipse cx="3.4" cy="4.6" rx="3.1" ry="3.9" transform="rotate(25 3.4 4.6)" fill="#f0c400" stroke="#b08800" stroke-width="0.6"/>
<ellipse cx="3" cy="3.8" rx="1.8" ry="2.2" transform="rotate(25 3 3.8)" fill="#ffe860"/>
<ellipse cx="3.3" cy="4.5" rx="0.7" ry="1.7" transform="rotate(25 3.3 4.5)" fill="#6a6a50"/>
</svg>
<div class="tr" style="left:287px;top:542px">Zugriff auf Adressverwaltung.Adressen</div>
<div class="hd" style="left:271px;top:569px;width:9px"></div>
<svg style="left:283px;top:561px" width="16" height="16" viewBox="0 0 16 16">
<path d="M0 15 C0 10.5 2 8.5 5.5 8.5 C9 8.5 10.5 10.5 10.5 15Z" fill="url(#ub)"/>
<path d="M4.5 9 L5.5 15 L6.5 9Z" fill="#9a9ac0"/>
<ellipse cx="5.8" cy="5.2" rx="3.4" ry="3.8" fill="#c87848"/>
<path d="M2.2 5.5 C1.6 -0.6 10 -0.6 9.4 5.5 L9 4 H2.6Z" fill="#262626"/>
<path d="M2.8 4.3 H8.8 V6 H2.8Z" fill="#151515"/>
<path d="M3.6 7.2 C4.2 9.2 7.4 9.2 8 7.2 L7.2 8 H4.4Z" fill="#2a1a10"/>
<path d="M10.2 9.5 V7.3 A2.4 2.4 0 0 1 15 7.3 V9.5" stroke="#909090" stroke-width="1.7" fill="none"/>
<path d="M10.2 9.5 V7.3 A2.4 2.4 0 0 1 15 7.3 V9.5" stroke="#f0f0f0" stroke-width="0.6" fill="none"/>
<rect x="8" y="9" width="7.8" height="6.3" rx="1" fill="url(#ul)"/>
</svg>
<div class="tr" style="left:305px;top:560px">Standard (ALLE)</div>
</div>
<!-- scrollbar -->
<div class="a" style="left:770px;top:236px;width:16px;height:331px;background:linear-gradient(90deg,#e8e8e8,#f2f2f2)"></div>
<svg style="left:774px;top:242px" width="8" height="4" viewBox="0 0 8 4"><path d="M0 4 L4 0 L8 4Z" fill="#3a3a3a"/></svg>
<svg style="left:775px;top:557px" width="8" height="4" viewBox="0 0 8 4"><path d="M0 0 L4 4 L8 0Z" fill="#3a3a3a"/></svg>
<div class="a" style="left:770px;top:254px;width:15px;height:117px;border:1px solid #9a9a9a;border-radius:2px;background:linear-gradient(90deg,#f4f4f4,#e6e6e6 50%,#d0d0d0)"></div>
<div class="a" style="left:774px;top:309px;width:7px;height:1px;background:#444;box-shadow:0 1px #fff"></div>
<div class="a" style="left:774px;top:311px;width:7px;height:1px;background:#444;box-shadow:0 1px #fff"></div>
<div class="a" style="left:774px;top:313px;width:7px;height:1px;background:#444;box-shadow:0 1px #fff"></div>
<!-- status bar -->
<div class="a" style="left:3px;top:578px;width:794px;height:19px;background:linear-gradient(#eef4fd,#eef4fd 1px,#dce8f8 1px,#d6e5f8 6px,#c2d8f3 7px,#d8e7f8);border-top:1px solid #9cc0ec"></div>
<div class="a" style="left:8px;top:583px;font-size:11px;color:#000;white-space:nowrap;letter-spacing:-0.12px">Hans client&nbsp; erweitertefunktionen.PNG</div>
<div class="a" style="left:204px;top:580px;width:1px;height:16px;background:#8eb0de;box-shadow:1px 0 #f0f6fe"></div>
<div class="a" style="left:407px;top:580px;width:1px;height:16px;background:#8eb0de;box-shadow:1px 0 #f0f6fe"></div>
<div class="a" style="left:510px;top:580px;width:1px;height:16px;background:#8eb0de;box-shadow:1px 0 #f0f6fe"></div>
<div class="a" style="left:211px;top:583px;font-size:11px;color:#000;white-space:nowrap">Benutzerverwaltung</div>
<div class="a" style="left:748px;top:580px;width:1px;height:16px;background:#8eb0de;box-shadow:1px 0 #f0f6fe"></div>
<div class="a" style="left:780px;top:580px;width:1px;height:16px;background:#8eb0de;box-shadow:1px 0 #f0f6fe"></div>
<svg style="left:757px;top:584px" width="17" height="8" viewBox="0 0 17 8"><rect x="0" y="0" width="17" height="8" fill="#007000"/><path d="M1 1 H16 L13 4 H4 L1 7Z" fill="#00f000"/><path d="M1.5 1.5 L4 4" stroke="#e0ffe0" stroke-width="0.9"/></svg>
<div class="a" style="left:791px;top:582px;width:2px;height:2px;background:#4a78c0"></div>
<div class="a" style="left:787px;top:586px;width:2px;height:2px;background:#4a78c0"></div>
<div class="a" style="left:791px;top:586px;width:2px;height:2px;background:#4a78c0"></div>
<div class="a" style="left:783px;top:590px;width:2px;height:2px;background:#4a78c0"></div>
<div class="a" style="left:787px;top:590px;width:2px;height:2px;background:#4a78c0"></div>
<div class="a" style="left:791px;top:590px;width:2px;height:2px;background:#4a78c0"></div>

</body></html>
